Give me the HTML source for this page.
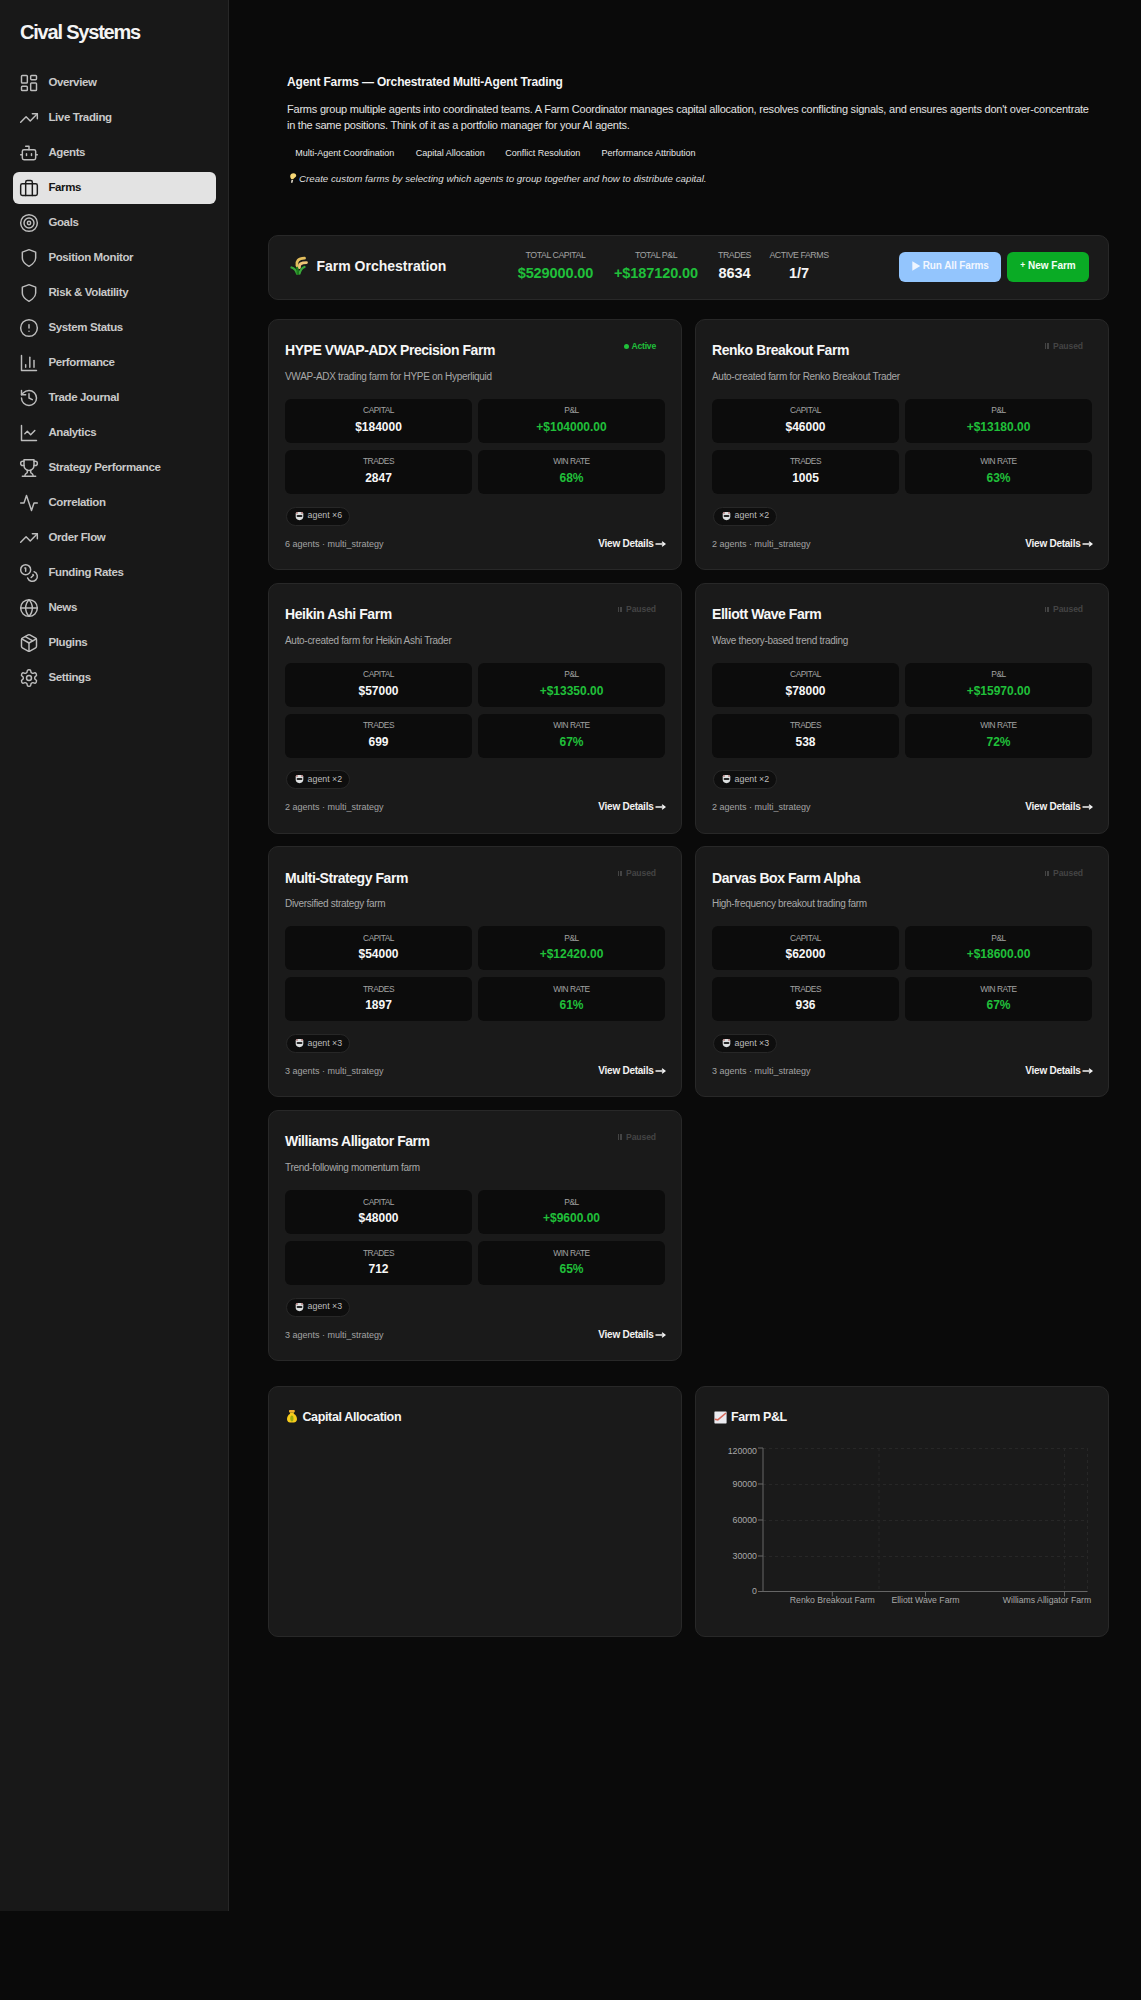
<!DOCTYPE html>
<html><head><meta charset="utf-8"><title>Cival Systems - Farms</title>
<style>
html,body{margin:0;padding:0;}
body{width:1141px;height:2000px;background:#0a0a0a;position:relative;overflow:hidden;font-family:"Liberation Sans",sans-serif;}
.t{position:absolute;white-space:nowrap;}
.r{position:absolute;}
</style></head><body>
<div class="r" style="left:0.00px;top:0.00px;width:229.00px;height:1911.00px;background:#181818;border-radius:0px;border-right:1px solid #272727;box-sizing:border-box;"></div>
<div class="t" style="left:20.00px;top:22.27px;font-size:20px;line-height:20px;font-weight:700;color:#f4f4f4;letter-spacing:-1.2px;">Cival Systems</div>
<svg class="r" style="left:19.00px;top:73.00px;" width="20" height="20" viewBox="0 0 24 24" fill="none" stroke="#bdbdbd" stroke-width="1.75" stroke-linecap="round" stroke-linejoin="round"><rect width="7" height="9" x="3" y="3" rx="1"/><rect width="7" height="5" x="14" y="3" rx="1"/><rect width="7" height="9" x="14" y="12" rx="1"/><rect width="7" height="5" x="3" y="16" rx="1"/></svg>
<div class="t" style="left:48.40px;top:76.87px;font-size:11.5px;line-height:11.5px;font-weight:600;color:#c9c9c9;letter-spacing:-0.37px;">Overview</div>
<svg class="r" style="left:19.00px;top:108.00px;" width="20" height="20" viewBox="0 0 24 24" fill="none" stroke="#bdbdbd" stroke-width="1.75" stroke-linecap="round" stroke-linejoin="round"><polyline points="22 7 13.5 15.5 8.5 10.5 2 17"/><polyline points="16 7 22 7 22 13"/></svg>
<div class="t" style="left:48.40px;top:111.87px;font-size:11.5px;line-height:11.5px;font-weight:600;color:#c9c9c9;letter-spacing:-0.37px;">Live Trading</div>
<svg class="r" style="left:19.00px;top:143.00px;" width="20" height="20" viewBox="0 0 24 24" fill="none" stroke="#bdbdbd" stroke-width="1.75" stroke-linecap="round" stroke-linejoin="round"><path d="M12 8V4H8"/><rect width="16" height="12" x="4" y="8" rx="2"/><path d="M2 14h2"/><path d="M20 14h2"/><path d="M15 13v2"/><path d="M9 13v2"/></svg>
<div class="t" style="left:48.40px;top:146.87px;font-size:11.5px;line-height:11.5px;font-weight:600;color:#c9c9c9;letter-spacing:-0.37px;">Agents</div>
<div class="r" style="left:13.00px;top:172.00px;width:203.00px;height:32.00px;background:#e3e3e3;border-radius:6px;"></div>
<svg class="r" style="left:19.00px;top:178.00px;" width="20" height="20" viewBox="0 0 24 24" fill="none" stroke="#1a1a1a" stroke-width="1.75" stroke-linecap="round" stroke-linejoin="round"><rect width="20" height="14" x="2" y="7" rx="2" ry="2"/><path d="M16 21V5a2 2 0 0 0-2-2h-4a2 2 0 0 0-2 2v16"/></svg>
<div class="t" style="left:48.40px;top:181.87px;font-size:11.5px;line-height:11.5px;font-weight:600;color:#141414;letter-spacing:-0.37px;">Farms</div>
<svg class="r" style="left:19.00px;top:213.00px;" width="20" height="20" viewBox="0 0 24 24" fill="none" stroke="#bdbdbd" stroke-width="1.75" stroke-linecap="round" stroke-linejoin="round"><circle cx="12" cy="12" r="10"/><circle cx="12" cy="12" r="6"/><circle cx="12" cy="12" r="2"/></svg>
<div class="t" style="left:48.40px;top:216.87px;font-size:11.5px;line-height:11.5px;font-weight:600;color:#c9c9c9;letter-spacing:-0.37px;">Goals</div>
<svg class="r" style="left:19.00px;top:248.00px;" width="20" height="20" viewBox="0 0 24 24" fill="none" stroke="#bdbdbd" stroke-width="1.75" stroke-linecap="round" stroke-linejoin="round"><path d="M12 22s8-4 8-10V5l-8-3-8 3v7c0 6 8 10 8 10z"/></svg>
<div class="t" style="left:48.40px;top:251.87px;font-size:11.5px;line-height:11.5px;font-weight:600;color:#c9c9c9;letter-spacing:-0.37px;">Position Monitor</div>
<svg class="r" style="left:19.00px;top:283.00px;" width="20" height="20" viewBox="0 0 24 24" fill="none" stroke="#bdbdbd" stroke-width="1.75" stroke-linecap="round" stroke-linejoin="round"><path d="M12 22s8-4 8-10V5l-8-3-8 3v7c0 6 8 10 8 10z"/></svg>
<div class="t" style="left:48.40px;top:286.87px;font-size:11.5px;line-height:11.5px;font-weight:600;color:#c9c9c9;letter-spacing:-0.37px;">Risk &amp; Volatility</div>
<svg class="r" style="left:19.00px;top:318.00px;" width="20" height="20" viewBox="0 0 24 24" fill="none" stroke="#bdbdbd" stroke-width="1.75" stroke-linecap="round" stroke-linejoin="round"><circle cx="12" cy="12" r="10"/><line x1="12" x2="12" y1="8" y2="12"/><line x1="12" x2="12.01" y1="16" y2="16"/></svg>
<div class="t" style="left:48.40px;top:321.87px;font-size:11.5px;line-height:11.5px;font-weight:600;color:#c9c9c9;letter-spacing:-0.37px;">System Status</div>
<svg class="r" style="left:19.00px;top:353.00px;" width="20" height="20" viewBox="0 0 24 24" fill="none" stroke="#bdbdbd" stroke-width="1.75" stroke-linecap="round" stroke-linejoin="round"><path d="M3 3v18h18"/><path d="M18 17V9"/><path d="M13 17V5"/><path d="M8 17v-3"/></svg>
<div class="t" style="left:48.40px;top:356.87px;font-size:11.5px;line-height:11.5px;font-weight:600;color:#c9c9c9;letter-spacing:-0.37px;">Performance</div>
<svg class="r" style="left:19.00px;top:388.00px;" width="20" height="20" viewBox="0 0 24 24" fill="none" stroke="#bdbdbd" stroke-width="1.75" stroke-linecap="round" stroke-linejoin="round"><path d="M3 12a9 9 0 1 0 9-9 9.75 9.75 0 0 0-6.74 2.74L3 8"/><path d="M3 3v5h5"/><path d="M12 7v5l4 2"/></svg>
<div class="t" style="left:48.40px;top:391.87px;font-size:11.5px;line-height:11.5px;font-weight:600;color:#c9c9c9;letter-spacing:-0.37px;">Trade Journal</div>
<svg class="r" style="left:19.00px;top:423.00px;" width="20" height="20" viewBox="0 0 24 24" fill="none" stroke="#bdbdbd" stroke-width="1.75" stroke-linecap="round" stroke-linejoin="round"><path d="M3 3v18h18"/><path d="m19 9-5 5-4-4-3 3"/></svg>
<div class="t" style="left:48.40px;top:426.87px;font-size:11.5px;line-height:11.5px;font-weight:600;color:#c9c9c9;letter-spacing:-0.37px;">Analytics</div>
<svg class="r" style="left:19.00px;top:458.00px;" width="20" height="20" viewBox="0 0 24 24" fill="none" stroke="#bdbdbd" stroke-width="1.75" stroke-linecap="round" stroke-linejoin="round"><path d="M6 9H4.5a2.5 2.5 0 0 1 0-5H6"/><path d="M18 9h1.5a2.5 2.5 0 0 0 0-5H18"/><path d="M4 22h16"/><path d="M10 14.66V17c0 .55-.47.98-.97 1.21C7.85 18.75 7 20.24 7 22"/><path d="M14 14.66V17c0 .55.47.98.97 1.21C16.15 18.75 17 20.24 17 22"/><path d="M18 2H6v7a6 6 0 0 0 12 0V2Z"/></svg>
<div class="t" style="left:48.40px;top:461.87px;font-size:11.5px;line-height:11.5px;font-weight:600;color:#c9c9c9;letter-spacing:-0.37px;">Strategy Performance</div>
<svg class="r" style="left:19.00px;top:493.00px;" width="20" height="20" viewBox="0 0 24 24" fill="none" stroke="#bdbdbd" stroke-width="1.75" stroke-linecap="round" stroke-linejoin="round"><path d="M22 12h-4l-3 9L9 3l-3 9H2"/></svg>
<div class="t" style="left:48.40px;top:496.87px;font-size:11.5px;line-height:11.5px;font-weight:600;color:#c9c9c9;letter-spacing:-0.37px;">Correlation</div>
<svg class="r" style="left:19.00px;top:528.00px;" width="20" height="20" viewBox="0 0 24 24" fill="none" stroke="#bdbdbd" stroke-width="1.75" stroke-linecap="round" stroke-linejoin="round"><polyline points="22 7 13.5 15.5 8.5 10.5 2 17"/><polyline points="16 7 22 7 22 13"/></svg>
<div class="t" style="left:48.40px;top:531.87px;font-size:11.5px;line-height:11.5px;font-weight:600;color:#c9c9c9;letter-spacing:-0.37px;">Order Flow</div>
<svg class="r" style="left:19.00px;top:563.00px;" width="20" height="20" viewBox="0 0 24 24" fill="none" stroke="#bdbdbd" stroke-width="1.75" stroke-linecap="round" stroke-linejoin="round"><circle cx="8" cy="8" r="6"/><path d="M18.09 10.37A6 6 0 1 1 10.34 18"/><path d="M7 6h1v4"/><path d="m16.71 13.88.7.71-2.82 2.82"/></svg>
<div class="t" style="left:48.40px;top:566.87px;font-size:11.5px;line-height:11.5px;font-weight:600;color:#c9c9c9;letter-spacing:-0.37px;">Funding Rates</div>
<svg class="r" style="left:19.00px;top:598.00px;" width="20" height="20" viewBox="0 0 24 24" fill="none" stroke="#bdbdbd" stroke-width="1.75" stroke-linecap="round" stroke-linejoin="round"><circle cx="12" cy="12" r="10"/><path d="M12 2a14.5 14.5 0 0 0 0 20 14.5 14.5 0 0 0 0-20"/><path d="M2 12h20"/></svg>
<div class="t" style="left:48.40px;top:601.87px;font-size:11.5px;line-height:11.5px;font-weight:600;color:#c9c9c9;letter-spacing:-0.37px;">News</div>
<svg class="r" style="left:19.00px;top:633.00px;" width="20" height="20" viewBox="0 0 24 24" fill="none" stroke="#bdbdbd" stroke-width="1.75" stroke-linecap="round" stroke-linejoin="round"><path d="m7.5 4.27 9 5.15"/><path d="M21 8a2 2 0 0 0-1-1.73l-7-4a2 2 0 0 0-2 0l-7 4A2 2 0 0 0 3 8v8a2 2 0 0 0 1 1.73l7 4a2 2 0 0 0 2 0l7-4A2 2 0 0 0 21 16Z"/><path d="m3.3 7 8.7 5 8.7-5"/><path d="M12 22V12"/></svg>
<div class="t" style="left:48.40px;top:636.87px;font-size:11.5px;line-height:11.5px;font-weight:600;color:#c9c9c9;letter-spacing:-0.37px;">Plugins</div>
<svg class="r" style="left:19.00px;top:668.00px;" width="20" height="20" viewBox="0 0 24 24" fill="none" stroke="#bdbdbd" stroke-width="1.75" stroke-linecap="round" stroke-linejoin="round"><path d="M12.22 2h-.44a2 2 0 0 0-2 2v.18a2 2 0 0 1-1 1.73l-.43.25a2 2 0 0 1-2 0l-.15-.08a2 2 0 0 0-2.73.73l-.22.38a2 2 0 0 0 .73 2.73l.15.1a2 2 0 0 1 1 1.72v.51a2 2 0 0 1-1 1.74l-.15.09a2 2 0 0 0-.73 2.73l.22.38a2 2 0 0 0 2.730.73l.15-.08a2 2 0 0 1 2 0l.43.25a2 2 0 0 1 1 1.73V20a2 2 0 0 0 2 2h.44a2 2 0 0 0 2-2v-.18a2 2 0 0 1 1-1.730l.43-.25a2 2 0 0 1 2 0l.15.08a2 2 0 0 0 2.73-.73l.22-.39a2 2 0 0 0-.73-2.73l-.15-.08a2 2 0 0 1-1-1.74v-.5a2 2 0 0 1 1-1.74l.15-.09a2 2 0 0 0 .73-2.73l-.22-.38a2 2 0 0 0-2.73-.73l-.15.08a2 2 0 0 1-2 0l-.43-.25a2 2 0 0 1-1-1.73V4a2 2 0 0 0-2-2z"/><circle cx="12" cy="12" r="3"/></svg>
<div class="t" style="left:48.40px;top:671.87px;font-size:11.5px;line-height:11.5px;font-weight:600;color:#c9c9c9;letter-spacing:-0.37px;">Settings</div>
<div class="t" style="left:287.00px;top:75.64px;font-size:12px;line-height:12px;font-weight:700;color:#f5f5f5;letter-spacing:-0.15px;">Agent Farms — Orchestrated Multi-Agent Trading</div>
<div class="t" style="left:287.00px;top:104.09px;font-size:11px;line-height:11px;font-weight:400;color:#e2e2e2;letter-spacing:-0.22px;">Farms group multiple agents into coordinated teams. A Farm Coordinator manages capital allocation, resolves conflicting signals, and ensures agents don't over-concentrate</div>
<div class="t" style="left:287.00px;top:119.89px;font-size:11px;line-height:11px;font-weight:400;color:#e2e2e2;letter-spacing:-0.25px;">in the same positions. Think of it as a portfolio manager for your AI agents.</div>
<div class="t" style="left:295.30px;top:149.18px;font-size:9px;line-height:9px;font-weight:400;color:#e8e8e8;">Multi-Agent Coordination</div>
<div class="t" style="left:415.70px;top:149.18px;font-size:9px;line-height:9px;font-weight:400;color:#e8e8e8;">Capital Allocation</div>
<div class="t" style="left:505.20px;top:149.18px;font-size:9px;line-height:9px;font-weight:400;color:#e8e8e8;">Conflict Resolution</div>
<div class="t" style="left:601.40px;top:149.18px;font-size:9px;line-height:9px;font-weight:400;color:#e8e8e8;">Performance Attribution</div>
<svg class="r" style="left:288px;top:172px" width="10" height="12" viewBox="0 0 10 12"><path d="M5.5 1.2 C3.6 1.2 2.2 2.5 2.2 4.2 C2.2 5.6 3 6.3 3.4 7.3 L5.2 7.3 C5.6 6.2 7.7 5.4 8.2 3.9 C8.4 2.4 7.3 1.2 5.5 1.2z" fill="#f7d774"/><path d="M3.5 8 L5.1 8 L4.5 10.8 L3 10.8z" fill="#e8e0d0"/></svg>
<div class="t" style="left:299.00px;top:173.75px;font-size:9.75px;line-height:9.75px;font-weight:400;color:#dedede;font-style:italic;">Create custom farms by selecting which agents to group together and how to distribute capital.</div>
<div class="r" style="left:268.00px;top:235.00px;width:841.00px;height:64.50px;background:#1a1a1a;border-radius:10px;border:1px solid #282828;box-sizing:border-box;"></div>
<svg class="r" style="left:286px;top:253px" width="26" height="26" viewBox="0 0 26 26">
<path d="M5.5 14.5 Q9.5 15.5 11 20.5" stroke="#3aa83a" stroke-width="2.3" fill="none" stroke-linecap="round"/>
<path d="M18.5 14 Q14.8 15.5 13.5 20.5" stroke="#3aa83a" stroke-width="2.3" fill="none" stroke-linecap="round"/>
<path d="M11 12 Q11.8 16.5 11.8 20.8" stroke="#1d7f1d" stroke-width="2.4" fill="none" stroke-linecap="round"/>
<path d="M11 12.5 C10.3 8 12 5.5 18.5 5.2" stroke="#e2bd5c" stroke-width="2.8" fill="none" stroke-linecap="round"/>
<path d="M13.5 14.5 C13 11 15 9.6 20.5 9.6" stroke="#efc577" stroke-width="2.8" fill="none" stroke-linecap="round"/>
</svg>
<div class="t" style="left:316.50px;top:259.15px;font-size:14px;line-height:14px;font-weight:700;color:#f5f5f5;">Farm Orchestration</div>
<div class="t" style="left:495.50px;width:120px;text-align:center;top:251.15px;font-size:8.8px;line-height:8.8px;font-weight:400;color:#a3a3a3;letter-spacing:-0.45px;">TOTAL CAPITAL</div>
<div class="t" style="left:485.50px;width:140px;text-align:center;top:266.03px;font-size:14.5px;line-height:14.5px;font-weight:700;color:#20c03a;letter-spacing:-0.1px;">$529000.00</div>
<div class="t" style="left:596.00px;width:120px;text-align:center;top:251.15px;font-size:8.8px;line-height:8.8px;font-weight:400;color:#a3a3a3;letter-spacing:-0.45px;">TOTAL P&amp;L</div>
<div class="t" style="left:586.00px;width:140px;text-align:center;top:266.03px;font-size:14.5px;line-height:14.5px;font-weight:700;color:#20c03a;letter-spacing:-0.1px;">+$187120.00</div>
<div class="t" style="left:674.50px;width:120px;text-align:center;top:251.15px;font-size:8.8px;line-height:8.8px;font-weight:400;color:#a3a3a3;letter-spacing:-0.45px;">TRADES</div>
<div class="t" style="left:664.50px;width:140px;text-align:center;top:266.03px;font-size:14.5px;line-height:14.5px;font-weight:700;color:#f5f5f5;letter-spacing:-0.1px;">8634</div>
<div class="t" style="left:739.00px;width:120px;text-align:center;top:251.15px;font-size:8.8px;line-height:8.8px;font-weight:400;color:#a3a3a3;letter-spacing:-0.45px;">ACTIVE FARMS</div>
<div class="t" style="left:729.00px;width:140px;text-align:center;top:266.03px;font-size:14.5px;line-height:14.5px;font-weight:700;color:#f5f5f5;letter-spacing:-0.1px;">1/7</div>
<div class="r" style="left:898.60px;top:252.00px;width:102.00px;height:30.00px;background:#93c5fd;border-radius:6px;"></div>
<svg class="r" style="left:911.5px;top:261px" width="9" height="10" viewBox="0 0 9 10"><path d="M0.3 0.3 L8.3 5 L0.3 9.7z" fill="#eef5ff"/></svg>
<div class="t" style="left:922.70px;top:260.94px;font-size:10px;line-height:10px;font-weight:600;color:#f2f7ff;letter-spacing:-0.1px;">Run All Farms</div>
<div class="r" style="left:1007.00px;top:252.00px;width:82.00px;height:30.00px;background:#0aab25;border-radius:6px;"></div>
<div class="t" style="left:1008.00px;width:80px;text-align:center;top:260.94px;font-size:10px;line-height:10px;font-weight:600;color:#f5fff5;"><span style="font-size:8.5px;position:relative;top:-0.5px">+</span> New Farm</div>
<div class="r" style="left:268.00px;top:319.00px;width:414.00px;height:251.00px;background:#1a1a1a;border-radius:10px;border:1px solid #282828;box-sizing:border-box;"></div>
<div class="t" style="left:285.00px;top:343.35px;font-size:14px;line-height:14px;font-weight:700;color:#f7f7f7;letter-spacing:-0.45px;">HYPE VWAP-ADX Precision Farm</div>
<div class="r" style="left:623.60px;top:343.50px;width:5.00px;height:5.00px;background:#20c03a;border-radius:3px;"></div>
<div class="t" style="left:596.00px;width:60px;text-align:right;top:341.52px;font-size:8.6px;line-height:8.6px;font-weight:600;color:#20c03a;letter-spacing:-0.2px;">Active</div>
<div class="t" style="left:285.00px;top:372.04px;font-size:10px;line-height:10px;font-weight:400;color:#a8a8a8;letter-spacing:-0.3px;">VWAP-ADX trading farm for HYPE on Hyperliquid</div>
<div class="r" style="left:285.00px;top:399.00px;width:187.00px;height:44.00px;background:#0c0c0c;border-radius:6px;"></div>
<div class="t" style="left:318.50px;width:120px;text-align:center;top:406.49px;font-size:8.4px;line-height:8.4px;font-weight:400;color:#a3a3a3;letter-spacing:-0.5px;">CAPITAL</div>
<div class="t" style="left:303.50px;width:150px;text-align:center;top:420.84px;font-size:12px;line-height:12px;font-weight:700;color:#f7f7f7;">$184000</div>
<div class="r" style="left:478.00px;top:399.00px;width:187.00px;height:44.00px;background:#0c0c0c;border-radius:6px;"></div>
<div class="t" style="left:511.50px;width:120px;text-align:center;top:406.49px;font-size:8.4px;line-height:8.4px;font-weight:400;color:#a3a3a3;letter-spacing:-0.5px;">P&amp;L</div>
<div class="t" style="left:496.50px;width:150px;text-align:center;top:420.84px;font-size:12px;line-height:12px;font-weight:700;color:#20c03a;">+$104000.00</div>
<div class="r" style="left:285.00px;top:450.00px;width:187.00px;height:44.00px;background:#0c0c0c;border-radius:6px;"></div>
<div class="t" style="left:318.50px;width:120px;text-align:center;top:457.49px;font-size:8.4px;line-height:8.4px;font-weight:400;color:#a3a3a3;letter-spacing:-0.5px;">TRADES</div>
<div class="t" style="left:303.50px;width:150px;text-align:center;top:471.84px;font-size:12px;line-height:12px;font-weight:700;color:#f7f7f7;">2847</div>
<div class="r" style="left:478.00px;top:450.00px;width:187.00px;height:44.00px;background:#0c0c0c;border-radius:6px;"></div>
<div class="t" style="left:511.50px;width:120px;text-align:center;top:457.49px;font-size:8.4px;line-height:8.4px;font-weight:400;color:#a3a3a3;letter-spacing:-0.5px;">WIN RATE</div>
<div class="t" style="left:496.50px;width:150px;text-align:center;top:471.84px;font-size:12px;line-height:12px;font-weight:700;color:#20c03a;">68%</div>
<div class="r" style="left:285.50px;top:506.50px;width:64.50px;height:19.00px;background:#0e0e0e;border-radius:10px;border:1px solid #272727;box-sizing:border-box;"></div>
<svg class="r" style="left:295.00px;top:510.80px" width="9" height="10" viewBox="0 0 9 10"><path d="M0.7 2.6 Q0.7 1 2.3 1 H6.7 Q8.3 1 8.3 2.6 V5.6 Q8.3 8.9 4.5 9.2 Q0.7 8.9 0.7 5.6z" fill="#dcdfe0"/><circle cx="2" cy="2" r=".9" fill="#b87a7a"/><circle cx="7" cy="2" r=".9" fill="#b87a7a"/><rect x="1.6" y="4" width="5.8" height="2" rx="1" fill="#262626"/></svg>
<div class="t" style="left:307.60px;top:511.25px;font-size:8.8px;line-height:8.8px;font-weight:400;color:#bdbdbd;">agent ×6</div>
<div class="t" style="left:285.00px;top:539.78px;font-size:9px;line-height:9px;font-weight:400;color:#a3a3a3;">6 agents · multi_strategy</div>
<div class="t" style="left:533.50px;width:120px;text-align:right;top:538.53px;font-size:10px;line-height:10px;font-weight:700;color:#f2f2f2;letter-spacing:-0.25px;">View Details</div>
<svg class="r" style="left:655.30px;top:540.50px" width="11" height="6" viewBox="0 0 11 6"><path d="M0.5 3 H9.5 M7 0.8 L10 3 L7 5.2" stroke="#f2f2f2" stroke-width="1.3" fill="none"/></svg>
<div class="r" style="left:695.00px;top:319.00px;width:414.00px;height:251.00px;background:#1a1a1a;border-radius:10px;border:1px solid #282828;box-sizing:border-box;"></div>
<div class="t" style="left:712.00px;top:343.35px;font-size:14px;line-height:14px;font-weight:700;color:#f7f7f7;letter-spacing:-0.45px;">Renko Breakout Farm</div>
<div class="r" style="left:1044.60px;top:343.30px;width:1.70px;height:5.50px;background:#444444;border-radius:0px;"></div>
<div class="r" style="left:1047.30px;top:343.30px;width:1.70px;height:5.50px;background:#444444;border-radius:0px;"></div>
<div class="t" style="left:1023.00px;width:60px;text-align:right;top:341.52px;font-size:8.6px;line-height:8.6px;font-weight:600;color:#444444;letter-spacing:-0.1px;">Paused</div>
<div class="t" style="left:712.00px;top:372.04px;font-size:10px;line-height:10px;font-weight:400;color:#a8a8a8;letter-spacing:-0.3px;">Auto-created farm for Renko Breakout Trader</div>
<div class="r" style="left:712.00px;top:399.00px;width:187.00px;height:44.00px;background:#0c0c0c;border-radius:6px;"></div>
<div class="t" style="left:745.50px;width:120px;text-align:center;top:406.49px;font-size:8.4px;line-height:8.4px;font-weight:400;color:#a3a3a3;letter-spacing:-0.5px;">CAPITAL</div>
<div class="t" style="left:730.50px;width:150px;text-align:center;top:420.84px;font-size:12px;line-height:12px;font-weight:700;color:#f7f7f7;">$46000</div>
<div class="r" style="left:905.00px;top:399.00px;width:187.00px;height:44.00px;background:#0c0c0c;border-radius:6px;"></div>
<div class="t" style="left:938.50px;width:120px;text-align:center;top:406.49px;font-size:8.4px;line-height:8.4px;font-weight:400;color:#a3a3a3;letter-spacing:-0.5px;">P&amp;L</div>
<div class="t" style="left:923.50px;width:150px;text-align:center;top:420.84px;font-size:12px;line-height:12px;font-weight:700;color:#20c03a;">+$13180.00</div>
<div class="r" style="left:712.00px;top:450.00px;width:187.00px;height:44.00px;background:#0c0c0c;border-radius:6px;"></div>
<div class="t" style="left:745.50px;width:120px;text-align:center;top:457.49px;font-size:8.4px;line-height:8.4px;font-weight:400;color:#a3a3a3;letter-spacing:-0.5px;">TRADES</div>
<div class="t" style="left:730.50px;width:150px;text-align:center;top:471.84px;font-size:12px;line-height:12px;font-weight:700;color:#f7f7f7;">1005</div>
<div class="r" style="left:905.00px;top:450.00px;width:187.00px;height:44.00px;background:#0c0c0c;border-radius:6px;"></div>
<div class="t" style="left:938.50px;width:120px;text-align:center;top:457.49px;font-size:8.4px;line-height:8.4px;font-weight:400;color:#a3a3a3;letter-spacing:-0.5px;">WIN RATE</div>
<div class="t" style="left:923.50px;width:150px;text-align:center;top:471.84px;font-size:12px;line-height:12px;font-weight:700;color:#20c03a;">63%</div>
<div class="r" style="left:712.50px;top:506.50px;width:64.50px;height:19.00px;background:#0e0e0e;border-radius:10px;border:1px solid #272727;box-sizing:border-box;"></div>
<svg class="r" style="left:722.00px;top:510.80px" width="9" height="10" viewBox="0 0 9 10"><path d="M0.7 2.6 Q0.7 1 2.3 1 H6.7 Q8.3 1 8.3 2.6 V5.6 Q8.3 8.9 4.5 9.2 Q0.7 8.9 0.7 5.6z" fill="#dcdfe0"/><circle cx="2" cy="2" r=".9" fill="#b87a7a"/><circle cx="7" cy="2" r=".9" fill="#b87a7a"/><rect x="1.6" y="4" width="5.8" height="2" rx="1" fill="#262626"/></svg>
<div class="t" style="left:734.60px;top:511.25px;font-size:8.8px;line-height:8.8px;font-weight:400;color:#bdbdbd;">agent ×2</div>
<div class="t" style="left:712.00px;top:539.78px;font-size:9px;line-height:9px;font-weight:400;color:#a3a3a3;">2 agents · multi_strategy</div>
<div class="t" style="left:960.50px;width:120px;text-align:right;top:538.53px;font-size:10px;line-height:10px;font-weight:700;color:#f2f2f2;letter-spacing:-0.25px;">View Details</div>
<svg class="r" style="left:1082.30px;top:540.50px" width="11" height="6" viewBox="0 0 11 6"><path d="M0.5 3 H9.5 M7 0.8 L10 3 L7 5.2" stroke="#f2f2f2" stroke-width="1.3" fill="none"/></svg>
<div class="r" style="left:268.00px;top:582.67px;width:414.00px;height:251.00px;background:#1a1a1a;border-radius:10px;border:1px solid #282828;box-sizing:border-box;"></div>
<div class="t" style="left:285.00px;top:607.02px;font-size:14px;line-height:14px;font-weight:700;color:#f7f7f7;letter-spacing:-0.45px;">Heikin Ashi Farm</div>
<div class="r" style="left:617.60px;top:606.97px;width:1.70px;height:5.50px;background:#444444;border-radius:0px;"></div>
<div class="r" style="left:620.30px;top:606.97px;width:1.70px;height:5.50px;background:#444444;border-radius:0px;"></div>
<div class="t" style="left:596.00px;width:60px;text-align:right;top:605.19px;font-size:8.6px;line-height:8.6px;font-weight:600;color:#444444;letter-spacing:-0.1px;">Paused</div>
<div class="t" style="left:285.00px;top:635.71px;font-size:10px;line-height:10px;font-weight:400;color:#a8a8a8;letter-spacing:-0.3px;">Auto-created farm for Heikin Ashi Trader</div>
<div class="r" style="left:285.00px;top:662.67px;width:187.00px;height:44.00px;background:#0c0c0c;border-radius:6px;"></div>
<div class="t" style="left:318.50px;width:120px;text-align:center;top:670.16px;font-size:8.4px;line-height:8.4px;font-weight:400;color:#a3a3a3;letter-spacing:-0.5px;">CAPITAL</div>
<div class="t" style="left:303.50px;width:150px;text-align:center;top:684.51px;font-size:12px;line-height:12px;font-weight:700;color:#f7f7f7;">$57000</div>
<div class="r" style="left:478.00px;top:662.67px;width:187.00px;height:44.00px;background:#0c0c0c;border-radius:6px;"></div>
<div class="t" style="left:511.50px;width:120px;text-align:center;top:670.16px;font-size:8.4px;line-height:8.4px;font-weight:400;color:#a3a3a3;letter-spacing:-0.5px;">P&amp;L</div>
<div class="t" style="left:496.50px;width:150px;text-align:center;top:684.51px;font-size:12px;line-height:12px;font-weight:700;color:#20c03a;">+$13350.00</div>
<div class="r" style="left:285.00px;top:713.67px;width:187.00px;height:44.00px;background:#0c0c0c;border-radius:6px;"></div>
<div class="t" style="left:318.50px;width:120px;text-align:center;top:721.16px;font-size:8.4px;line-height:8.4px;font-weight:400;color:#a3a3a3;letter-spacing:-0.5px;">TRADES</div>
<div class="t" style="left:303.50px;width:150px;text-align:center;top:735.51px;font-size:12px;line-height:12px;font-weight:700;color:#f7f7f7;">699</div>
<div class="r" style="left:478.00px;top:713.67px;width:187.00px;height:44.00px;background:#0c0c0c;border-radius:6px;"></div>
<div class="t" style="left:511.50px;width:120px;text-align:center;top:721.16px;font-size:8.4px;line-height:8.4px;font-weight:400;color:#a3a3a3;letter-spacing:-0.5px;">WIN RATE</div>
<div class="t" style="left:496.50px;width:150px;text-align:center;top:735.51px;font-size:12px;line-height:12px;font-weight:700;color:#20c03a;">67%</div>
<div class="r" style="left:285.50px;top:770.17px;width:64.50px;height:19.00px;background:#0e0e0e;border-radius:10px;border:1px solid #272727;box-sizing:border-box;"></div>
<svg class="r" style="left:295.00px;top:774.47px" width="9" height="10" viewBox="0 0 9 10"><path d="M0.7 2.6 Q0.7 1 2.3 1 H6.7 Q8.3 1 8.3 2.6 V5.6 Q8.3 8.9 4.5 9.2 Q0.7 8.9 0.7 5.6z" fill="#dcdfe0"/><circle cx="2" cy="2" r=".9" fill="#b87a7a"/><circle cx="7" cy="2" r=".9" fill="#b87a7a"/><rect x="1.6" y="4" width="5.8" height="2" rx="1" fill="#262626"/></svg>
<div class="t" style="left:307.60px;top:774.92px;font-size:8.8px;line-height:8.8px;font-weight:400;color:#bdbdbd;">agent ×2</div>
<div class="t" style="left:285.00px;top:803.45px;font-size:9px;line-height:9px;font-weight:400;color:#a3a3a3;">2 agents · multi_strategy</div>
<div class="t" style="left:533.50px;width:120px;text-align:right;top:802.21px;font-size:10px;line-height:10px;font-weight:700;color:#f2f2f2;letter-spacing:-0.25px;">View Details</div>
<svg class="r" style="left:655.30px;top:804.17px" width="11" height="6" viewBox="0 0 11 6"><path d="M0.5 3 H9.5 M7 0.8 L10 3 L7 5.2" stroke="#f2f2f2" stroke-width="1.3" fill="none"/></svg>
<div class="r" style="left:695.00px;top:582.67px;width:414.00px;height:251.00px;background:#1a1a1a;border-radius:10px;border:1px solid #282828;box-sizing:border-box;"></div>
<div class="t" style="left:712.00px;top:607.02px;font-size:14px;line-height:14px;font-weight:700;color:#f7f7f7;letter-spacing:-0.45px;">Elliott Wave Farm</div>
<div class="r" style="left:1044.60px;top:606.97px;width:1.70px;height:5.50px;background:#444444;border-radius:0px;"></div>
<div class="r" style="left:1047.30px;top:606.97px;width:1.70px;height:5.50px;background:#444444;border-radius:0px;"></div>
<div class="t" style="left:1023.00px;width:60px;text-align:right;top:605.19px;font-size:8.6px;line-height:8.6px;font-weight:600;color:#444444;letter-spacing:-0.1px;">Paused</div>
<div class="t" style="left:712.00px;top:635.71px;font-size:10px;line-height:10px;font-weight:400;color:#a8a8a8;letter-spacing:-0.3px;">Wave theory-based trend trading</div>
<div class="r" style="left:712.00px;top:662.67px;width:187.00px;height:44.00px;background:#0c0c0c;border-radius:6px;"></div>
<div class="t" style="left:745.50px;width:120px;text-align:center;top:670.16px;font-size:8.4px;line-height:8.4px;font-weight:400;color:#a3a3a3;letter-spacing:-0.5px;">CAPITAL</div>
<div class="t" style="left:730.50px;width:150px;text-align:center;top:684.51px;font-size:12px;line-height:12px;font-weight:700;color:#f7f7f7;">$78000</div>
<div class="r" style="left:905.00px;top:662.67px;width:187.00px;height:44.00px;background:#0c0c0c;border-radius:6px;"></div>
<div class="t" style="left:938.50px;width:120px;text-align:center;top:670.16px;font-size:8.4px;line-height:8.4px;font-weight:400;color:#a3a3a3;letter-spacing:-0.5px;">P&amp;L</div>
<div class="t" style="left:923.50px;width:150px;text-align:center;top:684.51px;font-size:12px;line-height:12px;font-weight:700;color:#20c03a;">+$15970.00</div>
<div class="r" style="left:712.00px;top:713.67px;width:187.00px;height:44.00px;background:#0c0c0c;border-radius:6px;"></div>
<div class="t" style="left:745.50px;width:120px;text-align:center;top:721.16px;font-size:8.4px;line-height:8.4px;font-weight:400;color:#a3a3a3;letter-spacing:-0.5px;">TRADES</div>
<div class="t" style="left:730.50px;width:150px;text-align:center;top:735.51px;font-size:12px;line-height:12px;font-weight:700;color:#f7f7f7;">538</div>
<div class="r" style="left:905.00px;top:713.67px;width:187.00px;height:44.00px;background:#0c0c0c;border-radius:6px;"></div>
<div class="t" style="left:938.50px;width:120px;text-align:center;top:721.16px;font-size:8.4px;line-height:8.4px;font-weight:400;color:#a3a3a3;letter-spacing:-0.5px;">WIN RATE</div>
<div class="t" style="left:923.50px;width:150px;text-align:center;top:735.51px;font-size:12px;line-height:12px;font-weight:700;color:#20c03a;">72%</div>
<div class="r" style="left:712.50px;top:770.17px;width:64.50px;height:19.00px;background:#0e0e0e;border-radius:10px;border:1px solid #272727;box-sizing:border-box;"></div>
<svg class="r" style="left:722.00px;top:774.47px" width="9" height="10" viewBox="0 0 9 10"><path d="M0.7 2.6 Q0.7 1 2.3 1 H6.7 Q8.3 1 8.3 2.6 V5.6 Q8.3 8.9 4.5 9.2 Q0.7 8.9 0.7 5.6z" fill="#dcdfe0"/><circle cx="2" cy="2" r=".9" fill="#b87a7a"/><circle cx="7" cy="2" r=".9" fill="#b87a7a"/><rect x="1.6" y="4" width="5.8" height="2" rx="1" fill="#262626"/></svg>
<div class="t" style="left:734.60px;top:774.92px;font-size:8.8px;line-height:8.8px;font-weight:400;color:#bdbdbd;">agent ×2</div>
<div class="t" style="left:712.00px;top:803.45px;font-size:9px;line-height:9px;font-weight:400;color:#a3a3a3;">2 agents · multi_strategy</div>
<div class="t" style="left:960.50px;width:120px;text-align:right;top:802.21px;font-size:10px;line-height:10px;font-weight:700;color:#f2f2f2;letter-spacing:-0.25px;">View Details</div>
<svg class="r" style="left:1082.30px;top:804.17px" width="11" height="6" viewBox="0 0 11 6"><path d="M0.5 3 H9.5 M7 0.8 L10 3 L7 5.2" stroke="#f2f2f2" stroke-width="1.3" fill="none"/></svg>
<div class="r" style="left:268.00px;top:846.34px;width:414.00px;height:251.00px;background:#1a1a1a;border-radius:10px;border:1px solid #282828;box-sizing:border-box;"></div>
<div class="t" style="left:285.00px;top:870.69px;font-size:14px;line-height:14px;font-weight:700;color:#f7f7f7;letter-spacing:-0.45px;">Multi-Strategy Farm</div>
<div class="r" style="left:617.60px;top:870.64px;width:1.70px;height:5.50px;background:#444444;border-radius:0px;"></div>
<div class="r" style="left:620.30px;top:870.64px;width:1.70px;height:5.50px;background:#444444;border-radius:0px;"></div>
<div class="t" style="left:596.00px;width:60px;text-align:right;top:868.86px;font-size:8.6px;line-height:8.6px;font-weight:600;color:#444444;letter-spacing:-0.1px;">Paused</div>
<div class="t" style="left:285.00px;top:899.38px;font-size:10px;line-height:10px;font-weight:400;color:#a8a8a8;letter-spacing:-0.3px;">Diversified strategy farm</div>
<div class="r" style="left:285.00px;top:926.34px;width:187.00px;height:44.00px;background:#0c0c0c;border-radius:6px;"></div>
<div class="t" style="left:318.50px;width:120px;text-align:center;top:933.83px;font-size:8.4px;line-height:8.4px;font-weight:400;color:#a3a3a3;letter-spacing:-0.5px;">CAPITAL</div>
<div class="t" style="left:303.50px;width:150px;text-align:center;top:948.18px;font-size:12px;line-height:12px;font-weight:700;color:#f7f7f7;">$54000</div>
<div class="r" style="left:478.00px;top:926.34px;width:187.00px;height:44.00px;background:#0c0c0c;border-radius:6px;"></div>
<div class="t" style="left:511.50px;width:120px;text-align:center;top:933.83px;font-size:8.4px;line-height:8.4px;font-weight:400;color:#a3a3a3;letter-spacing:-0.5px;">P&amp;L</div>
<div class="t" style="left:496.50px;width:150px;text-align:center;top:948.18px;font-size:12px;line-height:12px;font-weight:700;color:#20c03a;">+$12420.00</div>
<div class="r" style="left:285.00px;top:977.34px;width:187.00px;height:44.00px;background:#0c0c0c;border-radius:6px;"></div>
<div class="t" style="left:318.50px;width:120px;text-align:center;top:984.83px;font-size:8.4px;line-height:8.4px;font-weight:400;color:#a3a3a3;letter-spacing:-0.5px;">TRADES</div>
<div class="t" style="left:303.50px;width:150px;text-align:center;top:999.18px;font-size:12px;line-height:12px;font-weight:700;color:#f7f7f7;">1897</div>
<div class="r" style="left:478.00px;top:977.34px;width:187.00px;height:44.00px;background:#0c0c0c;border-radius:6px;"></div>
<div class="t" style="left:511.50px;width:120px;text-align:center;top:984.83px;font-size:8.4px;line-height:8.4px;font-weight:400;color:#a3a3a3;letter-spacing:-0.5px;">WIN RATE</div>
<div class="t" style="left:496.50px;width:150px;text-align:center;top:999.18px;font-size:12px;line-height:12px;font-weight:700;color:#20c03a;">61%</div>
<div class="r" style="left:285.50px;top:1033.84px;width:64.50px;height:19.00px;background:#0e0e0e;border-radius:10px;border:1px solid #272727;box-sizing:border-box;"></div>
<svg class="r" style="left:295.00px;top:1038.14px" width="9" height="10" viewBox="0 0 9 10"><path d="M0.7 2.6 Q0.7 1 2.3 1 H6.7 Q8.3 1 8.3 2.6 V5.6 Q8.3 8.9 4.5 9.2 Q0.7 8.9 0.7 5.6z" fill="#dcdfe0"/><circle cx="2" cy="2" r=".9" fill="#b87a7a"/><circle cx="7" cy="2" r=".9" fill="#b87a7a"/><rect x="1.6" y="4" width="5.8" height="2" rx="1" fill="#262626"/></svg>
<div class="t" style="left:307.60px;top:1038.59px;font-size:8.8px;line-height:8.8px;font-weight:400;color:#bdbdbd;">agent ×3</div>
<div class="t" style="left:285.00px;top:1067.12px;font-size:9px;line-height:9px;font-weight:400;color:#a3a3a3;">3 agents · multi_strategy</div>
<div class="t" style="left:533.50px;width:120px;text-align:right;top:1065.88px;font-size:10px;line-height:10px;font-weight:700;color:#f2f2f2;letter-spacing:-0.25px;">View Details</div>
<svg class="r" style="left:655.30px;top:1067.84px" width="11" height="6" viewBox="0 0 11 6"><path d="M0.5 3 H9.5 M7 0.8 L10 3 L7 5.2" stroke="#f2f2f2" stroke-width="1.3" fill="none"/></svg>
<div class="r" style="left:695.00px;top:846.34px;width:414.00px;height:251.00px;background:#1a1a1a;border-radius:10px;border:1px solid #282828;box-sizing:border-box;"></div>
<div class="t" style="left:712.00px;top:870.69px;font-size:14px;line-height:14px;font-weight:700;color:#f7f7f7;letter-spacing:-0.45px;">Darvas Box Farm Alpha</div>
<div class="r" style="left:1044.60px;top:870.64px;width:1.70px;height:5.50px;background:#444444;border-radius:0px;"></div>
<div class="r" style="left:1047.30px;top:870.64px;width:1.70px;height:5.50px;background:#444444;border-radius:0px;"></div>
<div class="t" style="left:1023.00px;width:60px;text-align:right;top:868.86px;font-size:8.6px;line-height:8.6px;font-weight:600;color:#444444;letter-spacing:-0.1px;">Paused</div>
<div class="t" style="left:712.00px;top:899.38px;font-size:10px;line-height:10px;font-weight:400;color:#a8a8a8;letter-spacing:-0.3px;">High-frequency breakout trading farm</div>
<div class="r" style="left:712.00px;top:926.34px;width:187.00px;height:44.00px;background:#0c0c0c;border-radius:6px;"></div>
<div class="t" style="left:745.50px;width:120px;text-align:center;top:933.83px;font-size:8.4px;line-height:8.4px;font-weight:400;color:#a3a3a3;letter-spacing:-0.5px;">CAPITAL</div>
<div class="t" style="left:730.50px;width:150px;text-align:center;top:948.18px;font-size:12px;line-height:12px;font-weight:700;color:#f7f7f7;">$62000</div>
<div class="r" style="left:905.00px;top:926.34px;width:187.00px;height:44.00px;background:#0c0c0c;border-radius:6px;"></div>
<div class="t" style="left:938.50px;width:120px;text-align:center;top:933.83px;font-size:8.4px;line-height:8.4px;font-weight:400;color:#a3a3a3;letter-spacing:-0.5px;">P&amp;L</div>
<div class="t" style="left:923.50px;width:150px;text-align:center;top:948.18px;font-size:12px;line-height:12px;font-weight:700;color:#20c03a;">+$18600.00</div>
<div class="r" style="left:712.00px;top:977.34px;width:187.00px;height:44.00px;background:#0c0c0c;border-radius:6px;"></div>
<div class="t" style="left:745.50px;width:120px;text-align:center;top:984.83px;font-size:8.4px;line-height:8.4px;font-weight:400;color:#a3a3a3;letter-spacing:-0.5px;">TRADES</div>
<div class="t" style="left:730.50px;width:150px;text-align:center;top:999.18px;font-size:12px;line-height:12px;font-weight:700;color:#f7f7f7;">936</div>
<div class="r" style="left:905.00px;top:977.34px;width:187.00px;height:44.00px;background:#0c0c0c;border-radius:6px;"></div>
<div class="t" style="left:938.50px;width:120px;text-align:center;top:984.83px;font-size:8.4px;line-height:8.4px;font-weight:400;color:#a3a3a3;letter-spacing:-0.5px;">WIN RATE</div>
<div class="t" style="left:923.50px;width:150px;text-align:center;top:999.18px;font-size:12px;line-height:12px;font-weight:700;color:#20c03a;">67%</div>
<div class="r" style="left:712.50px;top:1033.84px;width:64.50px;height:19.00px;background:#0e0e0e;border-radius:10px;border:1px solid #272727;box-sizing:border-box;"></div>
<svg class="r" style="left:722.00px;top:1038.14px" width="9" height="10" viewBox="0 0 9 10"><path d="M0.7 2.6 Q0.7 1 2.3 1 H6.7 Q8.3 1 8.3 2.6 V5.6 Q8.3 8.9 4.5 9.2 Q0.7 8.9 0.7 5.6z" fill="#dcdfe0"/><circle cx="2" cy="2" r=".9" fill="#b87a7a"/><circle cx="7" cy="2" r=".9" fill="#b87a7a"/><rect x="1.6" y="4" width="5.8" height="2" rx="1" fill="#262626"/></svg>
<div class="t" style="left:734.60px;top:1038.59px;font-size:8.8px;line-height:8.8px;font-weight:400;color:#bdbdbd;">agent ×3</div>
<div class="t" style="left:712.00px;top:1067.12px;font-size:9px;line-height:9px;font-weight:400;color:#a3a3a3;">3 agents · multi_strategy</div>
<div class="t" style="left:960.50px;width:120px;text-align:right;top:1065.88px;font-size:10px;line-height:10px;font-weight:700;color:#f2f2f2;letter-spacing:-0.25px;">View Details</div>
<svg class="r" style="left:1082.30px;top:1067.84px" width="11" height="6" viewBox="0 0 11 6"><path d="M0.5 3 H9.5 M7 0.8 L10 3 L7 5.2" stroke="#f2f2f2" stroke-width="1.3" fill="none"/></svg>
<div class="r" style="left:268.00px;top:1110.01px;width:414.00px;height:251.00px;background:#1a1a1a;border-radius:10px;border:1px solid #282828;box-sizing:border-box;"></div>
<div class="t" style="left:285.00px;top:1134.36px;font-size:14px;line-height:14px;font-weight:700;color:#f7f7f7;letter-spacing:-0.45px;">Williams Alligator Farm</div>
<div class="r" style="left:617.60px;top:1134.31px;width:1.70px;height:5.50px;background:#444444;border-radius:0px;"></div>
<div class="r" style="left:620.30px;top:1134.31px;width:1.70px;height:5.50px;background:#444444;border-radius:0px;"></div>
<div class="t" style="left:596.00px;width:60px;text-align:right;top:1132.53px;font-size:8.6px;line-height:8.6px;font-weight:600;color:#444444;letter-spacing:-0.1px;">Paused</div>
<div class="t" style="left:285.00px;top:1163.05px;font-size:10px;line-height:10px;font-weight:400;color:#a8a8a8;letter-spacing:-0.3px;">Trend-following momentum farm</div>
<div class="r" style="left:285.00px;top:1190.01px;width:187.00px;height:44.00px;background:#0c0c0c;border-radius:6px;"></div>
<div class="t" style="left:318.50px;width:120px;text-align:center;top:1197.50px;font-size:8.4px;line-height:8.4px;font-weight:400;color:#a3a3a3;letter-spacing:-0.5px;">CAPITAL</div>
<div class="t" style="left:303.50px;width:150px;text-align:center;top:1211.85px;font-size:12px;line-height:12px;font-weight:700;color:#f7f7f7;">$48000</div>
<div class="r" style="left:478.00px;top:1190.01px;width:187.00px;height:44.00px;background:#0c0c0c;border-radius:6px;"></div>
<div class="t" style="left:511.50px;width:120px;text-align:center;top:1197.50px;font-size:8.4px;line-height:8.4px;font-weight:400;color:#a3a3a3;letter-spacing:-0.5px;">P&amp;L</div>
<div class="t" style="left:496.50px;width:150px;text-align:center;top:1211.85px;font-size:12px;line-height:12px;font-weight:700;color:#20c03a;">+$9600.00</div>
<div class="r" style="left:285.00px;top:1241.01px;width:187.00px;height:44.00px;background:#0c0c0c;border-radius:6px;"></div>
<div class="t" style="left:318.50px;width:120px;text-align:center;top:1248.50px;font-size:8.4px;line-height:8.4px;font-weight:400;color:#a3a3a3;letter-spacing:-0.5px;">TRADES</div>
<div class="t" style="left:303.50px;width:150px;text-align:center;top:1262.85px;font-size:12px;line-height:12px;font-weight:700;color:#f7f7f7;">712</div>
<div class="r" style="left:478.00px;top:1241.01px;width:187.00px;height:44.00px;background:#0c0c0c;border-radius:6px;"></div>
<div class="t" style="left:511.50px;width:120px;text-align:center;top:1248.50px;font-size:8.4px;line-height:8.4px;font-weight:400;color:#a3a3a3;letter-spacing:-0.5px;">WIN RATE</div>
<div class="t" style="left:496.50px;width:150px;text-align:center;top:1262.85px;font-size:12px;line-height:12px;font-weight:700;color:#20c03a;">65%</div>
<div class="r" style="left:285.50px;top:1297.51px;width:64.50px;height:19.00px;background:#0e0e0e;border-radius:10px;border:1px solid #272727;box-sizing:border-box;"></div>
<svg class="r" style="left:295.00px;top:1301.81px" width="9" height="10" viewBox="0 0 9 10"><path d="M0.7 2.6 Q0.7 1 2.3 1 H6.7 Q8.3 1 8.3 2.6 V5.6 Q8.3 8.9 4.5 9.2 Q0.7 8.9 0.7 5.6z" fill="#dcdfe0"/><circle cx="2" cy="2" r=".9" fill="#b87a7a"/><circle cx="7" cy="2" r=".9" fill="#b87a7a"/><rect x="1.6" y="4" width="5.8" height="2" rx="1" fill="#262626"/></svg>
<div class="t" style="left:307.60px;top:1302.26px;font-size:8.8px;line-height:8.8px;font-weight:400;color:#bdbdbd;">agent ×3</div>
<div class="t" style="left:285.00px;top:1330.79px;font-size:9px;line-height:9px;font-weight:400;color:#a3a3a3;">3 agents · multi_strategy</div>
<div class="t" style="left:533.50px;width:120px;text-align:right;top:1329.55px;font-size:10px;line-height:10px;font-weight:700;color:#f2f2f2;letter-spacing:-0.25px;">View Details</div>
<svg class="r" style="left:655.30px;top:1331.51px" width="11" height="6" viewBox="0 0 11 6"><path d="M0.5 3 H9.5 M7 0.8 L10 3 L7 5.2" stroke="#f2f2f2" stroke-width="1.3" fill="none"/></svg>
<div class="r" style="left:268.00px;top:1386.00px;width:414.00px;height:250.50px;background:#1a1a1a;border-radius:10px;border:1px solid #282828;box-sizing:border-box;"></div>
<div class="r" style="left:695.00px;top:1386.00px;width:414.00px;height:250.50px;background:#1a1a1a;border-radius:10px;border:1px solid #282828;box-sizing:border-box;"></div>
<svg class="r" style="left:286px;top:1409px" width="12" height="15" viewBox="0 0 12 15"><rect x="3" y="1" width="5.8" height="2.4" rx=".8" fill="#f0b030"/><path d="M3.6 3.4 H8.2 L7.6 4.8 C10.2 6 11 8.2 11 10.2 C11 12.7 9 13.6 5.9 13.6 C2.8 13.6 1 12.7 1 10.2 C1 8.2 1.8 6 4.2 4.8z" fill="#f7cc1c"/><ellipse cx="5.9" cy="9.6" rx="1.6" ry="3" fill="#9aab10"/></svg>
<div class="t" style="left:302.40px;top:1410.72px;font-size:12.5px;line-height:12.5px;font-weight:600;color:#f5f5f5;letter-spacing:-0.35px;">Capital Allocation</div>
<svg class="r" style="left:713.5px;top:1410.5px" width="13" height="13" viewBox="0 0 13 13"><rect x="0.4" y="0.4" width="12.2" height="12" rx=".6" fill="#ebebf0"/><path d="M0.8 8.3 L3.8 8.8 L12 2" stroke="#d86a5c" stroke-width="1.6" fill="none"/></svg>
<div class="t" style="left:731.00px;top:1410.72px;font-size:12.5px;line-height:12.5px;font-weight:600;color:#f5f5f5;letter-spacing:-0.4px;">Farm P&amp;L</div>
<svg class="r" style="left:0;top:0" width="1141" height="2000" viewBox="0 0 1141 2000"><line x1="763" y1="1448.5" x2="1087.5" y2="1448.5" stroke="#272727" stroke-dasharray="3 3"/><line x1="763" y1="1484.5" x2="1087.5" y2="1484.5" stroke="#272727" stroke-dasharray="3 3"/><line x1="763" y1="1520.5" x2="1087.5" y2="1520.5" stroke="#272727" stroke-dasharray="3 3"/><line x1="763" y1="1556.5" x2="1087.5" y2="1556.5" stroke="#272727" stroke-dasharray="3 3"/><line x1="879" y1="1448" x2="879" y2="1591" stroke="#272727" stroke-dasharray="3 3"/><line x1="1064.5" y1="1448" x2="1064.5" y2="1591" stroke="#272727" stroke-dasharray="3 3"/><line x1="1087.5" y1="1448" x2="1087.5" y2="1591" stroke="#272727" stroke-dasharray="3 3"/><line x1="763" y1="1448" x2="763" y2="1591.5" stroke="#666"/><line x1="763" y1="1591.5" x2="1087.5" y2="1591.5" stroke="#666"/><line x1="758" y1="1448.0" x2="763" y2="1448.0" stroke="#666"/><line x1="758" y1="1484.0" x2="763" y2="1484.0" stroke="#666"/><line x1="758" y1="1520.0" x2="763" y2="1520.0" stroke="#666"/><line x1="758" y1="1556.0" x2="763" y2="1556.0" stroke="#666"/><line x1="758" y1="1591.5" x2="763" y2="1591.5" stroke="#666"/><line x1="832.3" y1="1591.5" x2="832.3" y2="1596.5" stroke="#666"/><line x1="925.5" y1="1591.5" x2="925.5" y2="1596.5" stroke="#666"/><line x1="1064.5" y1="1591.5" x2="1064.5" y2="1596.5" stroke="#666"/></svg>
<div class="t" style="left:707.00px;width:50px;text-align:right;top:1447.05px;font-size:8.8px;line-height:8.8px;font-weight:400;color:#a8a8a8;">120000</div>
<div class="t" style="left:707.00px;width:50px;text-align:right;top:1479.75px;font-size:8.8px;line-height:8.8px;font-weight:400;color:#a8a8a8;">90000</div>
<div class="t" style="left:707.00px;width:50px;text-align:right;top:1515.75px;font-size:8.8px;line-height:8.8px;font-weight:400;color:#a8a8a8;">60000</div>
<div class="t" style="left:707.00px;width:50px;text-align:right;top:1551.75px;font-size:8.8px;line-height:8.8px;font-weight:400;color:#a8a8a8;">30000</div>
<div class="t" style="left:707.00px;width:50px;text-align:right;top:1587.25px;font-size:8.8px;line-height:8.8px;font-weight:400;color:#a8a8a8;">0</div>
<div class="t" style="left:767.30px;width:130px;text-align:center;top:1596.34px;font-size:8.7px;line-height:8.7px;font-weight:400;color:#a8a8a8;">Renko Breakout Farm</div>
<div class="t" style="left:860.50px;width:130px;text-align:center;top:1596.34px;font-size:8.7px;line-height:8.7px;font-weight:400;color:#a8a8a8;">Elliott Wave Farm</div>
<div class="t" style="left:982.00px;width:130px;text-align:center;top:1596.34px;font-size:8.7px;line-height:8.7px;font-weight:400;color:#a8a8a8;">Williams Alligator Farm</div>
</body></html>
